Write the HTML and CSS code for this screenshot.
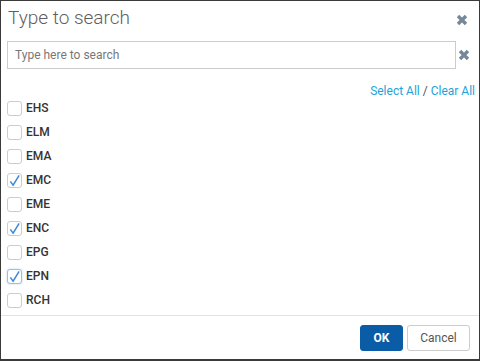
FILE: index.html
```html
<!DOCTYPE html>
<html lang="en">
<head>
    <meta charset="UTF-8">
    <title>Type to search</title>
    <link rel="stylesheet" href="styles.css">
</head>
<body>
    <div class="dialog">
        <div class="dialog-header">
            <h2 class="dialog-title">Type to search</h2>
            <button class="icon-btn close-btn" aria-label="Close">
                <svg viewBox="0 0 12 12"><path d="M2 2 L10 10 M10 2 L2 10"/></svg>
            </button>
        </div>

        <div class="search-row">
            <input class="search-input" type="text" placeholder="Type here to search">
            <button class="icon-btn clear-btn" aria-label="Clear">
                <svg viewBox="0 0 12 12"><path d="M2 2 L10 10 M10 2 L2 10"/></svg>
            </button>
        </div>

        <div class="bulk-links">
            <a href="#">Select All</a> <span class="sep">/</span> <a href="#">Clear All</a>
        </div>

        <ul class="option-list">
            <li class="option"><span class="box"></span>EHS</li>
            <li class="option"><span class="box"></span>ELM</li>
            <li class="option"><span class="box"></span>EMA</li>
            <li class="option checked"><span class="box"><svg viewBox="0 0 14 14"><path d="M2.5 8 L5.5 12 L12 1.5"/></svg></span>EMC</li>
            <li class="option"><span class="box"></span>EME</li>
            <li class="option checked"><span class="box"><svg viewBox="0 0 14 14"><path d="M2.5 8 L5.5 12 L12 1.5"/></svg></span>ENC</li>
            <li class="option"><span class="box"></span>EPG</li>
            <li class="option checked focused"><span class="box"><svg viewBox="0 0 14 14"><path d="M2.5 8 L5.5 12 L12 1.5"/></svg></span>EPN</li>
            <li class="option"><span class="box"></span>RCH</li>
        </ul>

        <div class="dialog-footer">
            <button class="btn btn-primary">OK</button>
            <button class="btn btn-default">Cancel</button>
        </div>
    </div>
</body>
</html>
```

FILE: styles.css
```css
:root {
    --text-color: #333;
    --muted-color: #5f5f5f;
    --border-color: #ccc;
    --link-color: #1ea3d8;
    --icon-color: #74889a;
    --primary-color: #0b5ca6;
    --check-color: #3a86d8;
}

* {
    box-sizing: border-box;
}

body {
    margin: 0;
    font-family: Roboto, "Liberation Sans", Arial, sans-serif;
    color: var(--text-color);
    background-color: #fff;
}

.dialog {
    width: 480px;
    height: 361px;
    border: 1px solid #3a3a3a;
    border-bottom-width: 2px;
    background-color: #fff;
    display: flex;
    flex-direction: column;
}

.dialog-header {
    display: flex;
    justify-content: space-between;
    align-items: flex-start;
    padding: 6px 11px 0 7px;
    height: 40px;
}

.dialog-title {
    margin: 0;
    font-size: 19px;
    line-height: 22px;
    font-weight: 300;
    color: var(--muted-color);
}

.icon-btn {
    background: none;
    border: none;
    padding: 0;
    width: 12px;
    height: 12px;
    cursor: pointer;
    display: flex;
}

.icon-btn svg {
    width: 12px;
    height: 12px;
}

.icon-btn path {
    stroke: var(--icon-color);
    stroke-width: 3.4;
    fill: none;
}

.close-btn {
    margin-top: 7px;
}

.search-row {
    display: flex;
    align-items: center;
    gap: 2px;
    padding: 0 0 0 6px;
}

.search-input {
    width: 449px;
    height: 28px;
    border: 1px solid var(--border-color);
    padding: 0 7px;
    font-family: inherit;
    font-size: 12px;
    color: var(--text-color);
    outline: none;
}

.search-input::placeholder {
    color: #777;
}

.bulk-links {
    text-align: right;
    padding: 17px 4px 0 0;
    font-size: 12px;
    line-height: 10px;
}

.bulk-links a {
    color: var(--link-color);
    text-decoration: none;
}

.bulk-links .sep {
    color: #555;
}

.option-list {
    list-style: none;
    margin: 0;
    padding: 0 0 0 6px;
    flex: 1;
}

.option {
    display: flex;
    align-items: center;
    gap: 4px;
    height: 24px;
    font-size: 12px;
    font-weight: 500;
    color: var(--text-color);
}

.box {
    width: 15px;
    height: 15px;
    border: 1px solid var(--border-color);
    border-radius: 3px;
    background-color: #fff;
    display: flex;
}

.box svg {
    width: 13px;
    height: 13px;
}

.box path {
    stroke: var(--check-color);
    stroke-width: 1.6;
    fill: none;
}

.option.focused .box {
    border-color: #9cbfe6;
    box-shadow: 0 0 2px rgba(58, 134, 216, 0.4);
}

.dialog-footer {
    display: flex;
    justify-content: flex-end;
    gap: 4px;
    border-top: 1px solid #e3e3e3;
    padding: 9px 9px 8px 0;
}

.btn {
    height: 26px;
    border-radius: 3px;
    font-family: inherit;
    font-size: 12px;
    cursor: pointer;
}

.btn-primary {
    width: 43px;
    background-color: var(--primary-color);
    border: 1px solid var(--primary-color);
    color: #fff;
    font-weight: 700;
}

.btn-default {
    width: 63px;
    background-color: #fff;
    border: 1px solid var(--border-color);
    color: #555;
}
```
